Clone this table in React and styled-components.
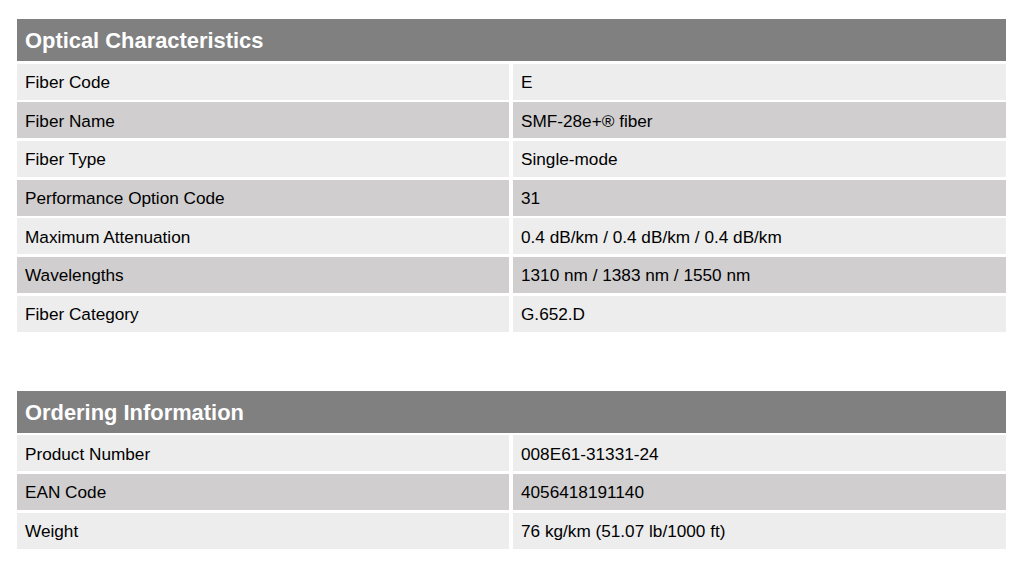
import styled, { createGlobalStyle } from "styled-components";

const optical = [
  ["Fiber Code", "E"],
  ["Fiber Name", "SMF-28e+® fiber"],
  ["Fiber Type", "Single-mode"],
  ["Performance Option Code", "31"],
  ["Maximum Attenuation", "0.4 dB/km / 0.4 dB/km / 0.4 dB/km"],
  ["Wavelengths", "1310 nm / 1383 nm / 1550 nm"],
  ["Fiber Category", "G.652.D"],
];

const ordering = [
  ["Product Number", "008E61-31331-24"],
  ["EAN Code", "4056418191140"],
  ["Weight", "76 kg/km (51.07 lb/1000 ft)"],
];

function SpecTable({ title, rows }) {
  return (
    <Table>
      <Header>{title}</Header>
      {rows.map(([label, value], i) => (
        <Row key={label}>
          <Cell $shade={i % 2 === 1}>{label}</Cell>
          <Cell $shade={i % 2 === 1}>{value}</Cell>
        </Row>
      ))}
    </Table>
  );
}

export default function App() {
  return (
    <>
      <GlobalStyle />
      <Page>
        <SpecTable title="Optical Characteristics" rows={optical} />
        <SpecTable title="Ordering Information" rows={ordering} />
      </Page>
    </>
  );
}

const GlobalStyle = createGlobalStyle`
  body {
    margin: 0;
    background: #fff;
    font-family: "Liberation Sans", Arial, sans-serif;
  }
`;

const Page = styled.div`
  width: 989px;
  padding: 19px 0 0 17px;
  display: flex;
  flex-direction: column;
  gap: 59px;
`;

const Table = styled.div`
  display: flex;
  flex-direction: column;
  gap: 2.67px;
`;

const Header = styled.div`
  height: 42px;
  box-sizing: border-box;
  display: flex;
  align-items: center;
  padding: 2px 0 0 8px;
  background: #808081;
  color: #fff;
  font-size: 21.9px;
  font-weight: bold;
`;

const Row = styled.div`
  display: grid;
  grid-template-columns: 492px 1fr;
  column-gap: 4px;
  height: 36px;
`;

const Cell = styled.div`
  display: flex;
  align-items: center;
  box-sizing: border-box;
  padding: 2px 0 0 8px;
  background: ${({ $shade }) => ($shade ? "#d0cecf" : "#ededed")};
  color: #000;
  font-size: 17.2px;
`;
